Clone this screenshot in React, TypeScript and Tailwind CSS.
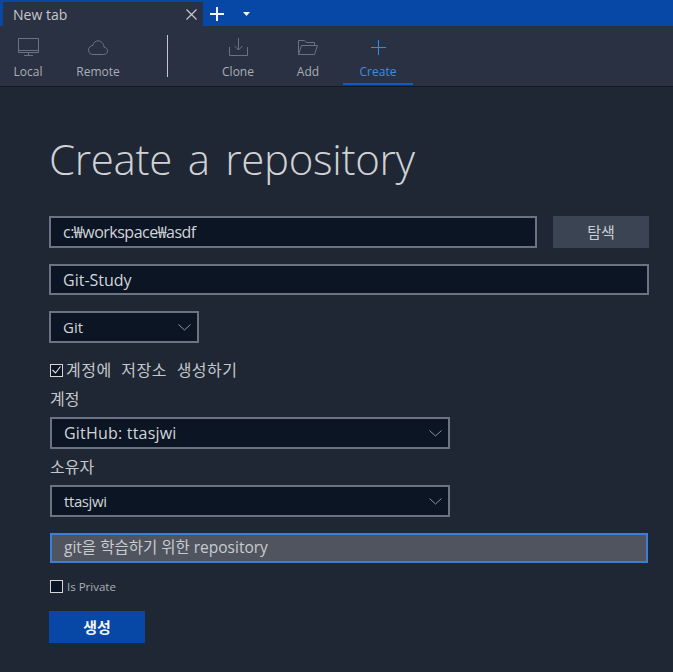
const font = { fontFamily: '"Open Sans", "Noto Sans CJK KR", sans-serif' };

function Chevron() {
  return (
    <svg width="13" height="7" viewBox="0 0 13 7" fill="none" stroke="#8b93a0" strokeWidth="1">
      <path d="M0.5 0.5 L6.5 6 L12.5 0.5" />
    </svg>
  );
}

function Field({ children, className }: { children: React.ReactNode; className: string }) {
  return (
    <div className={`flex items-center border-2 border-[#6b7380] bg-[#0b1524] pl-3 text-[#d2d4d8] ${className}`}>
      {children}
    </div>
  );
}

function Select({ value, className }: { value: string; className: string }) {
  return (
    <Field className={`justify-between pr-1.5 ${className}`}>
      <span>{value}</span>
      <Chevron />
    </Field>
  );
}

function ToolItem({
  label,
  icon,
  active,
}: {
  label: string;
  icon: React.ReactNode;
  active?: boolean;
}) {
  return (
    <div
      className={`flex h-[59px] w-[70px] flex-col items-center border-b-2 pt-[9px] ${
        active ? "border-[#0d5bc4]" : "border-transparent"
      }`}
    >
      <div className="flex h-[24px] items-center justify-center">{icon}</div>
      <span className={`mt-[4px] text-[12px] leading-[18px] ${active ? "text-[#3f8de0]" : "text-[#a9aeb6]"}`}>
        {label}
      </span>
    </div>
  );
}

export default function App() {
  return (
    <div style={font} className="flex h-[672px] w-[673px] flex-col overflow-hidden bg-[#202734]">
      {/* Tab strip */}
      <div className="flex h-[26px] shrink-0 items-end bg-[#0747a6] pl-[3px]">
        <div className="flex h-[24px] w-[200px] items-center justify-between bg-[#2a3142] pl-[10px] pr-[6px]">
          <span className="text-[14px] text-[#c5c8cd]">New tab</span>
          <svg width="11" height="11" viewBox="0 0 11 11" stroke="#c5c8cd" strokeWidth="1.2">
            <path d="M0.5 0.5 L10.5 10.5 M10.5 0.5 L0.5 10.5" />
          </svg>
        </div>
        <div className="flex h-[24px] items-center">
          <svg className="ml-[7px]" width="14" height="14" viewBox="0 0 14 14" stroke="#f2f5fa" strokeWidth="2">
            <path d="M7 0 V14 M0 7 H14" />
          </svg>
          <svg className="ml-[19px]" width="7" height="4" viewBox="0 0 7 4" fill="#f2f5fa">
            <path d="M0 0 H7 L3.5 4 Z" />
          </svg>
        </div>
      </div>

      {/* Toolbar */}
      <div className="flex h-[61px] shrink-0 items-start border-b border-[#14181f] bg-[#2a3142]">
        <div className="ml-[-7px] flex">
          <ToolItem
            label="Local"
            icon={
              <svg width="21" height="19" viewBox="0 0 21 19" fill="none" stroke="#6b7280">
                <path d="M0.5 0.5 H20.5 V14.5 H0.5 Z M0.5 12.5 H20.5 M10.5 14.5 V17.5 M6 17.5 H15" />
              </svg>
            }
          />
          <ToolItem
            label="Remote"
            icon={
              <svg width="20" height="15" viewBox="0 0 20 15" fill="none" stroke="#6b7280">
                <path d="M5 14.5 H15.5 C18 14.5 19.5 12.8 19.5 10.8 C19.5 8.8 18 7.3 16 7.2 C15.6 3.4 13.2 0.8 10 0.8 C7.2 0.8 5.4 2.8 4.9 5.4 C2.4 5.8 0.5 7.6 0.5 10 C0.5 12.6 2.4 14.5 5 14.5 Z" />
              </svg>
            }
          />
        </div>
        <div className="ml-[34px] mt-[9px] h-[42px] w-px shrink-0 bg-[#c4c7cc]" />
        <div className="ml-[35px] flex">
          <ToolItem
            label="Clone"
            icon={
              <svg width="19" height="18" viewBox="0 0 19 18" fill="none" stroke="#6b7280">
                <path d="M0.5 9 V17.5 H18.5 V9 M9.5 0 V12 M5.5 8 L9.5 12 L13.5 8" />
              </svg>
            }
          />
          <ToolItem
            label="Add"
            icon={
              <svg width="20" height="15" viewBox="0 0 20 15" fill="none" stroke="#6b7280">
                <path d="M0.5 14.5 V0.5 H6.5 L8.5 2.5 H16.5 V5 M3.5 5.5 H19.5 L16.5 14.5 H0.5 L3.5 5.5 Z" />
              </svg>
            }
          />
          <ToolItem
            label="Create"
            active
            icon={
              <svg width="15" height="15" viewBox="0 0 15 15" fill="none" stroke="#2f8cf0">
                <path d="M7.5 0 V15 M0 7.5 H15" />
              </svg>
            }
          />
        </div>
      </div>

      {/* Form */}
      <div className="flex flex-col pl-[49px] pr-[24px]">
        <h1 className="mt-[43px] h-[58px] text-[42px] font-light leading-[58px] tracking-[-0.3px] text-[#d0d2d5] [word-spacing:5px]">
          Create a repository
        </h1>

        <div className="mt-[28px] flex gap-4">
          <Field className="h-[32px] w-[488px] text-[16px] tracking-[-0.5px]">c:₩workspace₩asdf</Field>
          <div className="flex h-[32px] w-[96px] items-center justify-center bg-[#3a4453] text-[15px] text-[#c9cdd3]">
            탐색
          </div>
        </div>

        <Field className="mt-[16px] h-[31px] w-[600px] text-[16px]">Git-Study</Field>
        <Select value="Git" className="mt-[16px] h-[32px] w-[150px] text-[15px]" />

        <div className="ml-px mt-[19px] flex h-[16px] items-center gap-[3px]">
          <div className="flex size-[13px] items-center justify-center border border-[#d5d7da] bg-[#0b1524]">
            <svg width="9" height="8" viewBox="0 0 9 8" fill="none" stroke="#e5e7ea" strokeWidth="1.1">
              <path d="M0.5 4 L3.5 7 L8.5 0.5" />
            </svg>
          </div>
          <span className="text-[16px] leading-[16px] tracking-[0.5px] text-[#c4c7cc] [word-spacing:5px]">
            계정에 저장소 생성하기
          </span>
        </div>

        <span className="ml-px mt-[11px] text-[16px] leading-[20px] text-[#c4c7cc]">계정</span>
        <Select value="GitHub: ttasjwi" className="ml-px mt-[8px] h-[32px] w-[400px] text-[16px] tracking-[0.2px]" />
        <span className="ml-px mt-[8px] text-[16px] leading-[20px] text-[#c4c7cc]">소유자</span>
        <Select value="ttasjwi" className="ml-px mt-[8px] h-[32px] w-[400px] text-[15px] tracking-[-0.4px]" />

        <div className="ml-px mt-[16px] flex h-[30px] w-[598px] items-center border-2 border-[#3a7fd5] bg-[#50545f] pl-3 text-[15.5px] text-[#c9cbd0]">
          git을 학습하기 위한 repository
        </div>

        <div className="ml-px mt-[17px] flex h-[13px] items-center gap-[4px]">
          <div className="size-[13px] border border-[#d5d7da] bg-[#0b1524]" />
          <span className="text-[11.5px] text-[#a9aeb6]">Is Private</span>
        </div>

        <div className="mt-[18px] flex h-[32px] w-[96px] items-center justify-center bg-[#0747a6] text-[15px] font-bold text-[#f2f5fa]">
          생성
        </div>
      </div>
    </div>
  );
}
